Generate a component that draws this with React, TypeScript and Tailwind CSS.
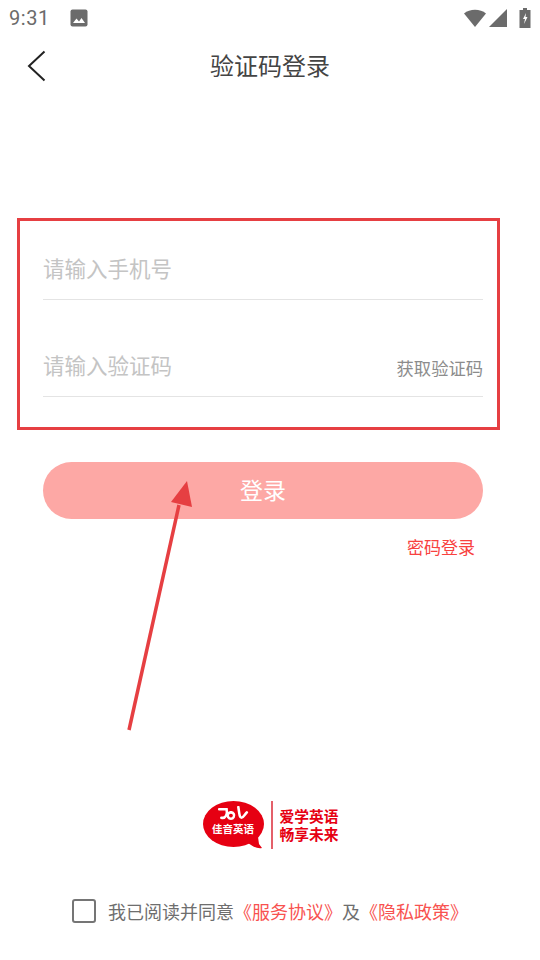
const cjk = { fontFamily: '"Noto Sans CJK SC", "Noto Sans", sans-serif' };

function StatusBar() {
  return (
    <div className="h-[36px] flex items-center justify-between pl-[9px] pr-[9px] text-[#6b6b6b]">
      <div className="flex items-center">
        <span className="text-[20px] leading-none tracking-[0.6px]" style={{ fontFamily: "Roboto, sans-serif" }}>
          9:31
        </span>
        <svg className="ml-[20px]" width="18" height="18" viewBox="0 0 18 18">
          <rect width="17" height="17" x="0.5" y="0.5" rx="2" fill="#6b6b6b" />
          <path d="M3 14l3.5-4.5 2.5 3 2.5-3.5L15 14z" fill="#fff" />
        </svg>
      </div>
      <div className="flex items-center gap-[3px]">
        <svg width="22" height="18" viewBox="0 0 22 18">
          <path d="M0 4.5C3 2 6.800 0.800 11 0.800S19 2 22 4.500L11 18z" fill="#6b6b6b" />
        </svg>
        <svg width="18" height="18" viewBox="0 0 18 18">
          <path d="M18 0v18H0z" fill="#6b6b6b" />
        </svg>
        <svg className="ml-[9px]" width="12" height="20" viewBox="0 0 11 20">
          <path d="M3.500 0h4v2H11v18H0V2h3.500z" fill="#6b6b6b" />
          <path d="M6.500 5L3.500 11h2l-1 5 3.500-7H6z" fill="#fff" />
        </svg>
      </div>
    </div>
  );
}

function Field({ placeholder, action, first }: { placeholder: string; action?: string; first?: boolean }) {
  return (
    <div
      className={
        first
          ? "h-[79px] ml-[23px] mr-[14px] border-b border-[#e4e4e4] flex items-end justify-between pb-[16px]"
          : "h-[97px] ml-[23px] mr-[14px] border-b border-[#e4e4e4] flex items-end justify-between pb-[16px]"
      }
    >
      <span className="text-[21.5px] leading-[30px] text-[#c4c4c4]">{placeholder}</span>
      {action && <span className="text-[17.3px] leading-[26px] -mb-[1px] text-[#8c8c8c]">{action}</span>}
    </div>
  );
}

function Logo() {
  return (
    <div className="flex justify-center items-center ml-[1px]">
      <div className="relative w-[61px] h-[49px]">
        <div className="absolute left-0 top-[1px] w-[61px] h-[46px] rounded-[50%] bg-[#e60012] flex flex-col items-center pt-[5px]">
          <svg width="34" height="17" viewBox="0 0 30 16" fill="none" stroke="#fff" strokeWidth="2.400" strokeLinecap="round">
            <path d="M2 3h7c1 5-1 9-5 8" />
            <path d="M13 6a3 3 0 1 0 .1 0" />
            <path d="M20 1c1 6 1 10 3 10s3-3 5-5" />
          </svg>
          <span className="text-[10.5px] leading-[11px] font-bold text-white">佳音英语</span>
        </div>
        <svg className="absolute right-[2px] bottom-0" width="14" height="12" viewBox="0 0 14 12">
          <path d="M0 0h10l1 7 3 4c-5 1-10-2-14-5z" fill="#e60012" />
        </svg>
      </div>
      <div className="w-[2px] h-[48px] bg-[#e4606a] ml-[7px] mr-[7px]" />
      <div className="flex flex-col gap-[1px] text-[14.75px] leading-[17px] font-bold text-[#e60012]">
        <div>爱学英语</div>
        <div>畅享未来</div>
      </div>
    </div>
  );
}

export default function App() {
  return (
    <div className="relative w-[540px] h-[960px] bg-white overflow-hidden flex flex-col" style={cjk}>
      <StatusBar />

      <div className="relative h-[60px] flex items-center justify-center">
        <svg className="absolute left-[26px] top-[14px]" width="20" height="32" viewBox="0 0 20 32" fill="none" stroke="#222" strokeWidth="2">
          <path d="M18.500 1.500L3 16l15.500 14.500" />
        </svg>
        <h1 className="text-[24px] leading-[30px] -mt-[2px] text-[#444] font-normal">验证码登录</h1>
      </div>

      <div className="mt-[123px] mx-[17px] w-[483px] h-[212px] border-[3px] border-[#e63f42] -translate-y-[1px]">
        <Field first placeholder="请输入手机号" />
        <Field placeholder="请输入验证码" action="获取验证码" />
      </div>

      <button className="mt-[31px] ml-[43px] w-[440px] h-[57px] rounded-full bg-[#fda8a5] text-white text-[23px] leading-[53px] pb-[2px]">
        登录
      </button>

      <div className="mt-[15px] pr-[65px] text-right text-[17px] leading-[26px] text-[#f8423f]">密码登录</div>

      <div className="mt-[240px]">
        <Logo />
      </div>

      <div className="mt-[49px] ml-[72px] flex items-center text-[18px] leading-[26px] text-[#6e6e6e] whitespace-nowrap">
        <span className="w-[24px] h-[24px] rounded-[3px] border-2 border-[#757575] mr-[12px]" />
        <span>我已阅读并同意</span>
        <span className="text-[#f8524f]">《服务协议》</span>
        <span>及</span>
        <span className="text-[#f8524f]">《隐私政策》</span>
      </div>

      <svg className="absolute left-[120px] top-[475px]" width="80" height="260" viewBox="0 0 80 260">
        <path d="M9 255L59 30" stroke="#e63f42" strokeWidth="3.5" fill="none" />
        <path d="M67 6L51 27 72 32z" fill="#e63f42" />
      </svg>
    </div>
  );
}
